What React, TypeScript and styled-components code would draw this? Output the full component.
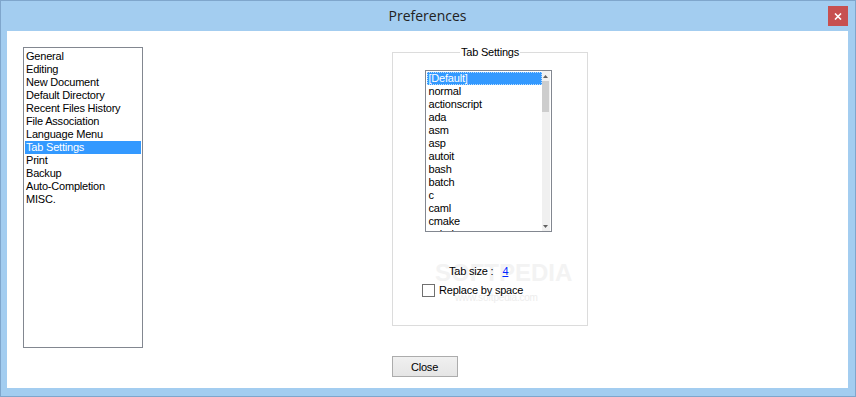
import React from 'react'
import styled, { createGlobalStyle } from 'styled-components'

const Global = createGlobalStyle`
  html, body { margin: 0; padding: 0; }
  body {
    width: 856px;
    height: 397px;
    overflow: hidden;
    font-family: Tahoma, "Liberation Sans", Arial, sans-serif;
    font-size: 11px;
    letter-spacing: -0.2px;
    color: #000;
  }
`

const Window = styled.div`
  box-sizing: border-box;
  width: 856px;
  height: 397px;
  background: #a3cdf0;
  border: 1px solid #7fa6cc;
  display: flex;
  flex-direction: column;
  padding: 0 7px 8px 6px;
`

const TitleBar = styled.div`
  height: 29px;
  display: flex;
  align-items: center;
  justify-content: center;
  position: relative;
  font-family: "Segoe UI", "Open Sans", "Noto Sans", sans-serif;
  font-size: 14px;
  letter-spacing: 0;
  color: #222;
  padding-bottom: 1px;
`

const CloseX = styled.div`
  position: absolute;
  right: 0;
  top: 5px;
  width: 20px;
  height: 20px;
  background: #c75050;
  display: flex;
  align-items: center;
  justify-content: center;
`

const Client = styled.div`
  flex: 1;
  background: #fff;
  display: flex;
  flex-direction: column;
  position: relative;
`

const Body = styled.div`
  display: flex;
  align-items: flex-start;
  padding: 16px 0 0 16px;
  position: relative;
  z-index: 1;
`

const NavList = styled.div`
  box-sizing: border-box;
  width: 120px;
  height: 301px;
  border: 1px solid #828790;
  padding: 2px 1px 1px;
  display: flex;
  flex-direction: column;
`

const Item = styled.div<{ $sel?: boolean }>`
  height: 13px;
  line-height: 13px;
  padding-left: 1px;
  white-space: nowrap;
  background: ${p => (p.$sel ? '#3399ff' : 'transparent')};
  color: ${p => (p.$sel ? '#fff' : '#000')};
`

const Group = styled.fieldset`
  box-sizing: border-box;
  margin: -1px 0 0 249px;
  width: 196px;
  height: 280px;
  border: 1px solid #dcdcdc;
  padding: 0;
  display: flex;
  flex-direction: column;
  align-items: center;
  legend {
    margin: 0 auto;
    padding: 0 1px;
    line-height: 13px;
    color: #000;
  }
`

const LangBox = styled.div`
  box-sizing: border-box;
  width: 127px;
  height: 162px;
  margin: 11px 4px 0 0;
  border: 1px solid #828790;
  display: flex;
  overflow: hidden;
  background: #fff;
`

const LangItems = styled.div`
  flex: 1;
  padding: 1px 0 0 1px;
  overflow: hidden;
`

const LangItem = styled(Item)`
  padding-left: 2px;
  ${p => (p.$sel ? 'outline: 1px dotted #b9dcff; outline-offset: -1px;' : '')}
`

const ScrollBar = styled.div`
  width: 8px;
  background: #f0f0f0;
  display: flex;
  flex-direction: column;
  align-items: center;
  border-right: 1px solid #fff;
`

const Arrow = styled.div`
  height: 10px;
  width: 8px;
  display: flex;
  align-items: center;
  justify-content: center;
`

const Thumb = styled.div`
  width: 7px;
  height: 31px;
  background: #cdcdcd;
`

const Track = styled.div`
  flex: 1;
`

const TabSize = styled.div`
  align-self: flex-start;
  margin: 33px 0 0 56px;
  line-height: 13px;
  display: flex;
  gap: 9px;
`

const Num = styled.span`
  color: #0026ff;
  text-decoration: underline;
`

const CheckRow = styled.label`
  align-self: flex-start;
  margin: 6px 0 0 29px;
  display: flex;
  align-items: center;
  gap: 4px;
  line-height: 13px;
`

const Box = styled.span`
  box-sizing: border-box;
  width: 13px;
  height: 13px;
  border: 1px solid #707070;
  background: #fff;
`

const Footer = styled.div`
  display: flex;
  justify-content: center;
  margin-top: 8px;
  padding-right: 6px;
`

const Button = styled.button`
  box-sizing: border-box;
  width: 66px;
  height: 21px;
  border: 1px solid #acacac;
  background: linear-gradient(#f0f0f0, #e5e5e5);
  font-family: inherit;
  font-size: 11px;
  letter-spacing: inherit;
  color: #000;
  padding: 0;
`

const Watermark = styled.div`
  position: absolute;
  left: 428px;
  top: 228px;
  z-index: 0;
  font-family: "Liberation Sans", sans-serif;
  font-weight: bold;
  font-size: 24px;
  letter-spacing: 0;
  color: #f3f3f3;
  pointer-events: none;
`

const WaterSmall = styled.div`
  position: absolute;
  left: 448px;
  top: 261px;
  z-index: 0;
  font-size: 10px;
  color: #ededed;
  pointer-events: none;
`

const sections = [
  'General', 'Editing', 'New Document', 'Default Directory', 'Recent Files History',
  'File Association', 'Language Menu', 'Tab Settings', 'Print', 'Backup',
  'Auto-Completion', 'MISC.',
]

const langs = [
  '[Default]', 'normal', 'actionscript', 'ada', 'asm', 'asp', 'autoit', 'bash',
  'batch', 'c', 'caml', 'cmake', 'cobol', 'cpp',
]

export default function App() {
  return (
    <>
      <Global />
      <Window>
        <TitleBar>
          Preferences
          <CloseX>
            <svg width="8" height="7" viewBox="0 0 8 7">
              <path d="M1 0.5 L7 6.5 M7 0.5 L1 6.5" stroke="#fff" strokeWidth="1.6" />
            </svg>
          </CloseX>
        </TitleBar>
        <Client>
          <Watermark>SOFTPEDIA</Watermark>
          <WaterSmall>www.softpedia.com</WaterSmall>
          <Body>
            <NavList>
              {sections.map(s => (
                <Item key={s} $sel={s === 'Tab Settings'}>{s}</Item>
              ))}
            </NavList>
            <Group>
              <legend>Tab Settings</legend>
              <LangBox>
                <LangItems>
                  {langs.map(l => (
                    <LangItem key={l} $sel={l === '[Default]'}>{l}</LangItem>
                  ))}
                </LangItems>
                <ScrollBar>
                  <Arrow>
                    <svg width="5" height="3" viewBox="0 0 5 3"><path d="M0 3 L2.5 0 L5 3 Z" fill="#606060" /></svg>
                  </Arrow>
                  <Thumb />
                  <Track />
                  <Arrow>
                    <svg width="5" height="3" viewBox="0 0 5 3"><path d="M0 0 L2.5 3 L5 0 Z" fill="#606060" /></svg>
                  </Arrow>
                </ScrollBar>
              </LangBox>
              <TabSize>
                <span>Tab size :</span>
                <Num>4</Num>
              </TabSize>
              <CheckRow>
                <Box />
                Replace by space
              </CheckRow>
            </Group>
          </Body>
          <Footer>
            <Button>Close</Button>
          </Footer>
        </Client>
      </Window>
    </>
  )
}
